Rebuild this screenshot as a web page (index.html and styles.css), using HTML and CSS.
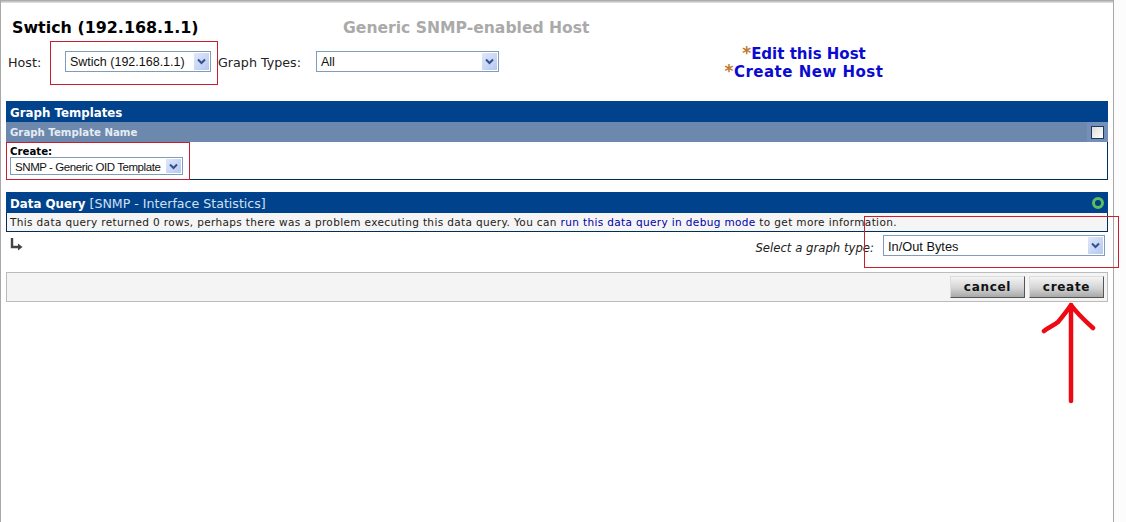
FILE: index.html
```html
<!DOCTYPE html>
<html lang="en">
<head>
    <meta charset="UTF-8">
    <meta name="viewport" content="width=device-width, initial-scale=1.0">
    <title>Swtich (192.168.1.1)</title>
    <link rel="stylesheet" href="styles.css">
</head>
<body>

    <div class="page">
        <div class="top-shadow"></div>

        <div class="host-head">
            <div class="host-info">
                <div class="title-row">
                    <h1 class="host-title">Swtich (192.168.1.1)</h1>
                    <span class="host-type">Generic SNMP-enabled Host</span>
                </div>
                <div class="filter-row">
                    <span class="filter-label host-label">Host:</span>
                    <div class="dropdown host-select">
                        <span class="dropdown-text">Swtich (192.168.1.1)</span>
                        <span class="dropdown-arrow"><svg width="9" height="7" viewBox="0 0 9 7"><path d="M1 1.5 4.5 5 8 1.5" fill="none" stroke="#35508a" stroke-width="2"/></svg></span>
                    </div>
                    <span class="filter-label types-label">Graph Types:</span>
                    <div class="dropdown types-select">
                        <span class="dropdown-text">All</span>
                        <span class="dropdown-arrow"><svg width="9" height="7" viewBox="0 0 9 7"><path d="M1 1.5 4.5 5 8 1.5" fill="none" stroke="#35508a" stroke-width="2"/></svg></span>
                    </div>
                </div>
            </div>
            <div class="host-links">
                <div><span class="star">*</span><a href="#">Edit this Host</a></div>
                <div class="new-host"><span class="star">*</span><a href="#">Create New Host</a></div>
            </div>
        </div>

        <div class="panel templates-panel">
            <div class="panel-title">Graph Templates</div>
            <div class="panel-subtitle">
                <span>Graph Template Name</span>
                <span class="check-cell"><span class="check-box"></span></span>
            </div>
            <div class="create-cell">
                <div class="create-label">Create:</div>
                <div class="dropdown template-select">
                    <span class="dropdown-text">SNMP - Generic OID Template</span>
                    <span class="dropdown-arrow"><svg width="9" height="7" viewBox="0 0 9 7"><path d="M1 1.5 4.5 5 8 1.5" fill="none" stroke="#35508a" stroke-width="2"/></svg></span>
                </div>
            </div>
        </div>

        <div class="panel query-panel">
            <div class="panel-title query-title">
                <span>Data Query <span class="query-name">[SNMP - Interface Statistics]</span></span>
                <span class="status-ring"></span>
            </div>
            <div class="query-note">This data query returned 0 rows, perhaps there was a problem executing this data query. You can <a href="#">run this data query in debug mode</a> to get more information.</div>
        </div>

        <div class="graph-type-row">
            <svg class="corner-arrow" width="13" height="13" viewBox="0 0 13 13"><path d="M2 0V9H9" fill="none" stroke="#444" stroke-width="2.4"/><path d="M8 5.5 12.5 9 8 12.5Z" fill="#444"/></svg>
            <span class="graph-type-label">Select a graph type:</span>
            <div class="dropdown graph-select">
                <span class="dropdown-text">In/Out Bytes</span>
                <span class="dropdown-arrow"><svg width="9" height="7" viewBox="0 0 9 7"><path d="M1 1.5 4.5 5 8 1.5" fill="none" stroke="#35508a" stroke-width="2"/></svg></span>
            </div>
        </div>

        <div class="save-bar">
            <button class="save-button">cancel</button>
            <button class="save-button">create</button>
        </div>

        <!-- red marks drawn over the screenshot -->
        <div class="mark mark-host"></div>
        <div class="mark mark-template"></div>
        <div class="mark mark-graph"></div>
        <svg class="mark-arrow" width="56" height="102" viewBox="0 0 56 102">
            <path d="M30 3V99" fill="none" stroke="#ee0a14" stroke-width="4.5" stroke-linecap="round"/>
            <path d="M3 29C8 25 12 24 17 20C22 14 26 9 30 3C35 10 42 17 52 26" fill="none" stroke="#ee0a14" stroke-width="4.5" stroke-linecap="round" stroke-linejoin="round"/>
        </svg>
    </div>

</body>
</html>
```

FILE: styles.css
```css
* {
    box-sizing: border-box;
}
html, body {
    margin: 0;
    height: 100%;
    overflow: hidden;
}
body {
    background-color: #fcfcfc;
    color: #000;
    font-family: "DejaVu Sans", Verdana, sans-serif;
}
a {
    text-decoration: none;
}
.page {
    position: relative;
    width: 1114px;
    height: 522px;
    padding: 0 5px 0 5px;
    background-color: #fff;
    border-left: 1px solid #a8a8a8;
    border-right: 1px solid #a8a8a8;
}
.top-shadow {
    height: 3px;
    margin: 0 -5px;
    background: linear-gradient(#a0a0a0, #e8e8e8);
}

/* head */
.host-head {
    display: flex;
    height: 98px;
}
.host-info {
    width: 620px;
}
.title-row {
    display: flex;
    align-items: center;
    height: 48px;
    padding-left: 6px;
}
.host-title {
    width: 331px;
    margin: 0;
    font-size: 15.9px;
    font-weight: bold;
}
.host-type {
    padding-top: 1px;
    color: #aaa;
    font-size: 15.6px;
    font-weight: bold;
}
.filter-row {
    display: flex;
    align-items: center;
    height: 21px;
    font-size: 12.7px;
    color: #222;
}
.filter-label {
    padding-top: 1px;
}
.host-label {
    width: 59px;
    padding-left: 2px;
}
.types-label {
    width: 105px;
    padding-left: 7px;
}
.host-links {
    width: 260px;
    margin-left: 28px;
    padding-top: 42px;
    padding-left: 40px;
    text-align: center;
    font-size: 15px;
    font-weight: bold;
    line-height: 18px;
}
.host-links a {
    color: #0a0ad0;
}
.new-host {
    letter-spacing: 0.5px;
}
.star {
    color: #c07a30;
    font-size: 17px;
    line-height: 16px;
}

/* drop downs */
.dropdown {
    display: flex;
    align-items: center;
    justify-content: space-between;
    height: 21px;
    padding: 2px 1px 2px 4px;
    background-color: #fff;
    border: 1px solid #7f9db9;
    font-family: "Liberation Sans", Arial, sans-serif;
    font-size: 12.5px;
    color: #111;
    white-space: nowrap;
}
.dropdown-text {
    padding-top: 1px;
}
.dropdown-arrow {
    display: flex;
    flex: none;
    align-items: center;
    justify-content: center;
    width: 15px;
    height: 17px;
    background: linear-gradient(135deg, #dfe8fb, #b5c7f2);
}
.host-select {
    width: 146px;
}
.types-select {
    width: 183px;
}
.template-select {
    width: 173px;
    height: 18px;
    font-size: 11.5px;
    letter-spacing: -0.42px;
}
.template-select .dropdown-arrow {
    height: 14px;
}
.graph-select {
    width: 222px;
    font-size: 12.8px;
}

/* panels */
.panel {
    width: 1102px;
    border: 1px solid #00305a;
    border-top: none;
}
.panel-title {
    height: 21px;
    padding: 5px 4px 0;
    margin: 0 -1px;
    background-color: #00438c;
    color: #fff;
    font-size: 11.8px;
    font-weight: bold;
}
.panel-subtitle {
    display: flex;
    justify-content: space-between;
    height: 20px;
    margin: 0 -1px;
    padding-left: 4px;
    background-color: #6d88ad;
    color: #e6ecf4;
    font-size: 10.2px;
    font-weight: bold;
    line-height: 21px;
}
.check-cell {
    display: flex;
    align-items: center;
    justify-content: center;
    width: 21px;
    background-color: #7590b8;
}
.check-box {
    width: 13px;
    height: 13px;
    background: linear-gradient(135deg, #dcdcd6, #fff);
    border: 1px solid #1c3a5e;
}
.create-cell {
    height: 37px;
    padding: 3px 3px 0;
}
.create-label {
    height: 12px;
    font-size: 10.2px;
    font-weight: bold;
    line-height: 14px;
}
.query-panel {
    margin-top: 12px;
}
.query-title {
    display: flex;
    align-items: center;
    justify-content: space-between;
    padding: 1px 4px 0;
}
.query-name {
    color: #cfe0f5;
    font-size: 12.6px;
    font-weight: normal;
}
.status-ring {
    width: 12px;
    height: 12px;
    border: 3px solid #58c060;
    border-radius: 50%;
    background-color: #003a80;
}
.query-note {
    height: 18px;
    padding-left: 3px;
    background-color: #f5f5f5;
    font-size: 10.5px;
    letter-spacing: 0.36px;
    line-height: 19px;
    color: #222;
    white-space: nowrap;
}
.query-note a {
    color: #0000aa;
}

/* graph type row */
.graph-type-row {
    display: flex;
    align-items: flex-start;
    width: 1102px;
    height: 40px;
    padding-top: 3px;
}
.corner-arrow {
    flex: none;
    margin: 3px 0 0 4px;
}
.graph-type-label {
    flex: 1;
    padding-top: 6px;
    padding-right: 9px;
    text-align: right;
    font-size: 11.7px;
    font-style: italic;
    color: #222;
}
.graph-select {
    flex: none;
    margin-right: 3px;
}

/* save bar */
.save-bar {
    display: flex;
    justify-content: flex-end;
    align-items: center;
    gap: 4px;
    width: 1102px;
    height: 30px;
    padding-right: 3px;
    background-color: #f4f4f4;
    border: 1px solid #bbb;
}
.save-button {
    width: 75px;
    height: 22px;
    padding: 0;
    background: linear-gradient(#f4f4f4, #d4d4d4 55%, #a8a8a8);
    border: 1px solid;
    border-color: #ddd #555 #555 #ddd;
    font-family: "DejaVu Sans", Verdana, sans-serif;
    font-size: 12px;
    font-weight: bold;
    letter-spacing: 0.7px;
    color: #111;
}

/* red marks over the page */
.mark {
    position: absolute;
    border: 1px solid #c81e32;
}
.mark-host {
    left: 49px;
    top: 41px;
    width: 168px;
    height: 44px;
}
.mark-template {
    left: 5px;
    top: 142px;
    width: 184px;
    height: 38px;
}
.mark-graph {
    left: 863px;
    top: 216px;
    width: 255px;
    height: 52px;
}
.mark-arrow {
    position: absolute;
    left: 1040px;
    top: 302px;
}
```
